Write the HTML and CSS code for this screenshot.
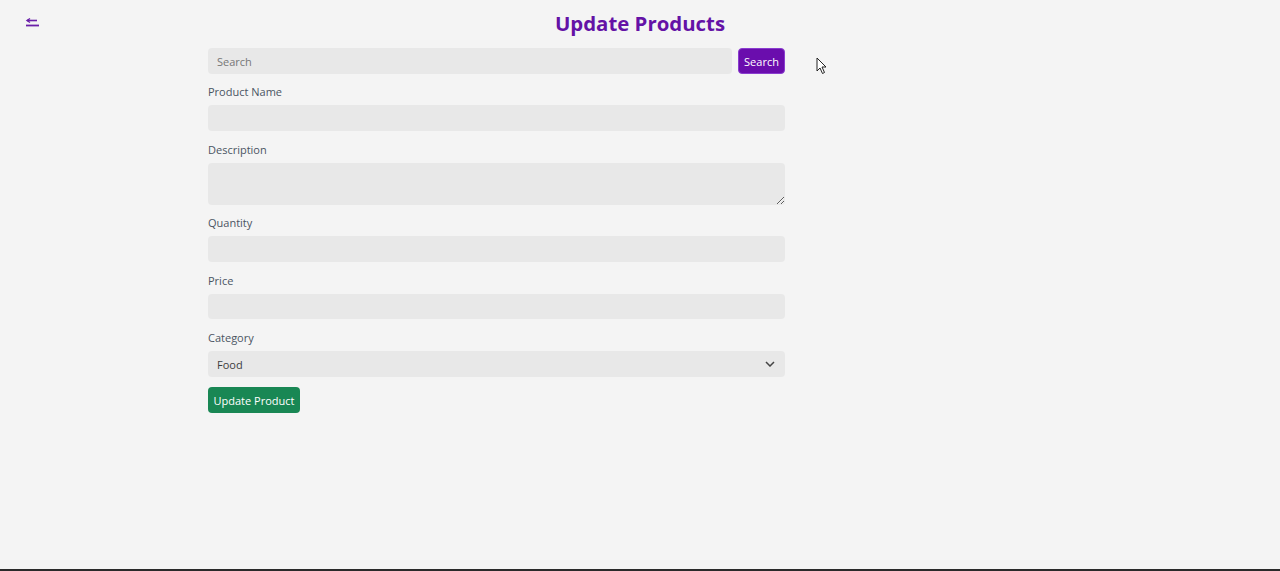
FILE: index.html
```html
<!DOCTYPE html>
<html>
<head>
<meta charset="utf-8">
<link rel="stylesheet" href="styles.css">
</head>
<body>
<div class="page">
  <header class="topbar">
    <button class="back" aria-label="Back">
      <svg width="16" height="12" viewBox="0 0 16 12"><path d="M5 2.5 L2 4.5 L5 6.5" fill="none" stroke="#6a1fa8" stroke-width="1.4"/><path d="M2 4.5 H12" stroke="#6a1fa8" stroke-width="1.6"/><path d="M1 9.5 H14" stroke="#6a1fa8" stroke-width="1.8"/></svg>
    </button>
    <h1 class="title">Update Products</h1>
  </header>
  <main class="form">
    <div class="search-row">
      <input class="field search-input" type="text" placeholder="Search">
      <button class="btn btn-purple">Search</button>
    </div>
    <label class="label">Product Name</label>
    <input class="field" type="text">
    <label class="label">Description</label>
    <textarea class="field area"></textarea>
    <label class="label">Quantity</label>
    <input class="field" type="text">
    <label class="label">Price</label>
    <input class="field field-short" type="text">
    <label class="label">Category</label>
    <div class="select">
      <span>Food</span>
      <svg width="10" height="6" viewBox="0 0 10 6"><path d="M1 1 L5 5 L9 1" fill="none" stroke="#444" stroke-width="1.5"/></svg>
    </div>
    <div class="actions"><button class="btn btn-green">Update Product</button></div>
  </main>
  <svg class="cursor" width="12" height="18" viewBox="0 0 12 18"><path d="M1 1 L1 14 L4 11 L6.5 16.5 L8.5 15.5 L6 10 L10 10 Z" fill="#fff" stroke="#222" stroke-width="1"/></svg>
</div>
</body>
</html>
```
FILE: styles.css
```css
* { box-sizing: border-box; }
html, body { margin: 0; padding: 0; }
body {
  background: #f4f4f4;
  font-family: "Open Sans", "Noto Sans", sans-serif;
  height: 571px;
  overflow: hidden;
}
.page {
  position: relative;
  height: 571px;
  border-bottom: 2px solid #2a2a2a;
}
.topbar {
  position: relative;
  height: 46px;
}
.back {
  position: absolute;
  left: 25px;
  top: 16px;
  padding: 0;
  border: 0;
  background: none;
  width: 16px;
  height: 12px;
}
.back svg { display: block; }
.title {
  margin: 0;
  padding-top: 8px;
  text-align: center;
  font-size: 20.4px;
  font-weight: 700;
  color: #6412a6;
  line-height: 30px;
}
.form {
  width: 577px;
  margin-left: 208px;
  margin-top: 2px;
  display: flex;
  flex-direction: column;
}
.search-row {
  display: flex;
  gap: 6px;
  margin-bottom: 10px;
}
.field {
  display: block;
  width: 100%;
  height: 26px;
  border: 0;
  border-radius: 4px;
  background: #e8e8e8;
  font-family: inherit;
  font-size: 11px;
  padding: 0 9px;
  color: #333;
  outline: none;
}
.field-short { height: 25px; }
.field::placeholder { color: #777; }
.search-input { flex: 1; }
.area {
  height: 42px;
  resize: vertical;
}
.label {
  font-size: 11px;
  color: #4b5563;
  line-height: 16px;
  margin-bottom: 5px;
}
.field + .label, .area + .label, .select + .label { margin-top: 11px; }
.area + .label { margin-top: 10px; }
.btn {
  border: 0;
  border-radius: 4px;
  font-family: inherit;
  font-size: 11px;
  color: #fff;
  height: 26px;
  padding: 0 8px;
}
.btn-purple {
  background: #6a0dad;
  width: 47px;
  padding: 0;
  border: 1px solid #8a3ccf;
}
.select {
  height: 26px;
  border-radius: 4px;
  background: #e8e8e8;
  display: flex;
  align-items: center;
  justify-content: space-between;
  padding: 0 10px 0 9px;
  font-size: 11px;
  color: #3d3d3d;
}
.actions {
  margin-top: 10px;
  display: flex;
}
.btn-green {
  background: #198754;
  width: 92px;
  padding: 0;
}
.cursor {
  position: absolute;
  left: 816px;
  top: 57px;
}
```
